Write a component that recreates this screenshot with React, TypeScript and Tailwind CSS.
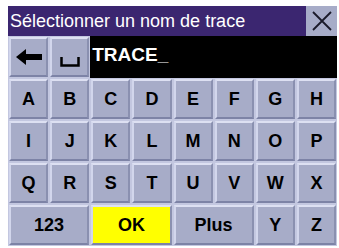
import React from 'react';

const Key: React.FC<{ label?: React.ReactNode; span?: number; yellow?: boolean }> = ({ label, span = 1, yellow }) => (
  <div className={`p-[1px] h-[42px] ${span === 2 ? 'col-span-2' : ''}`}>
    <div
      className={`h-full flex items-center justify-center border-2 border-t-[#dde0f2] border-l-[#d2d6ec] border-b-[#7d83a6] border-r-[#8a90b0] text-[18px] font-bold text-black ${
        yellow ? 'bg-[#ffff00]' : 'bg-[#a7acc8]'
      }`}
    >
      {label}
    </div>
  </div>
);

const rows = [
  ['A', 'B', 'C', 'D', 'E', 'F', 'G', 'H'],
  ['I', 'J', 'K', 'L', 'M', 'N', 'O', 'P'],
  ['Q', 'R', 'S', 'T', 'U', 'V', 'W', 'X'],
];

export default function App() {
  return (
    <div
      className="w-[339px] h-[248px] bg-white pt-[6px] pl-[8px] pr-[2px] overflow-hidden"
      style={{ fontFamily: '"Liberation Sans", Arial, sans-serif' }}
    >
      <div className="flex h-[30px]">
        <div className="flex-1 bg-[#3b2670] text-white text-[18px] leading-[30px] pl-[2px] whitespace-nowrap">
          Sélectionner un nom de trace
        </div>
        <div className="w-[31px] bg-[#a7acc8] flex items-center justify-center">
          <svg width="22" height="22" viewBox="0 0 22 22">
            <path d="M2 2 L20 20 M20 2 L2 20" stroke="#1a1a2a" strokeWidth="1.8" />
          </svg>
        </div>
      </div>
      <div className="bg-[#c3c7e0] grid grid-cols-8">
        <Key
          label={
            <svg width="28" height="18" viewBox="0 0 28 18">
              <path d="M1 9 L11 1 L11 6 L27 6 L27 12 L11 12 L11 17 Z" fill="#000" />
            </svg>
          }
        />
        <Key
          label={
            <svg width="20" height="10" viewBox="0 0 20 10" className="mt-[10px]">
              <path d="M1.5 0 L1.5 8.5 L18.5 8.5 L18.5 0" stroke="#000" strokeWidth="2.5" fill="none" />
            </svg>
          }
        />
        <div className="col-span-6 h-[42px] bg-black text-white font-bold text-[19px] leading-[38px] pl-[2px]">
          TRACE_
        </div>
        {rows.flat().map((k) => (
          <Key key={k} label={k} />
        ))}
        <Key label="123" span={2} />
        <Key label="OK" span={2} yellow />
        <Key label="Plus" span={2} />
        <Key label="Y" />
        <Key label="Z" />
      </div>
    </div>
  );
}
